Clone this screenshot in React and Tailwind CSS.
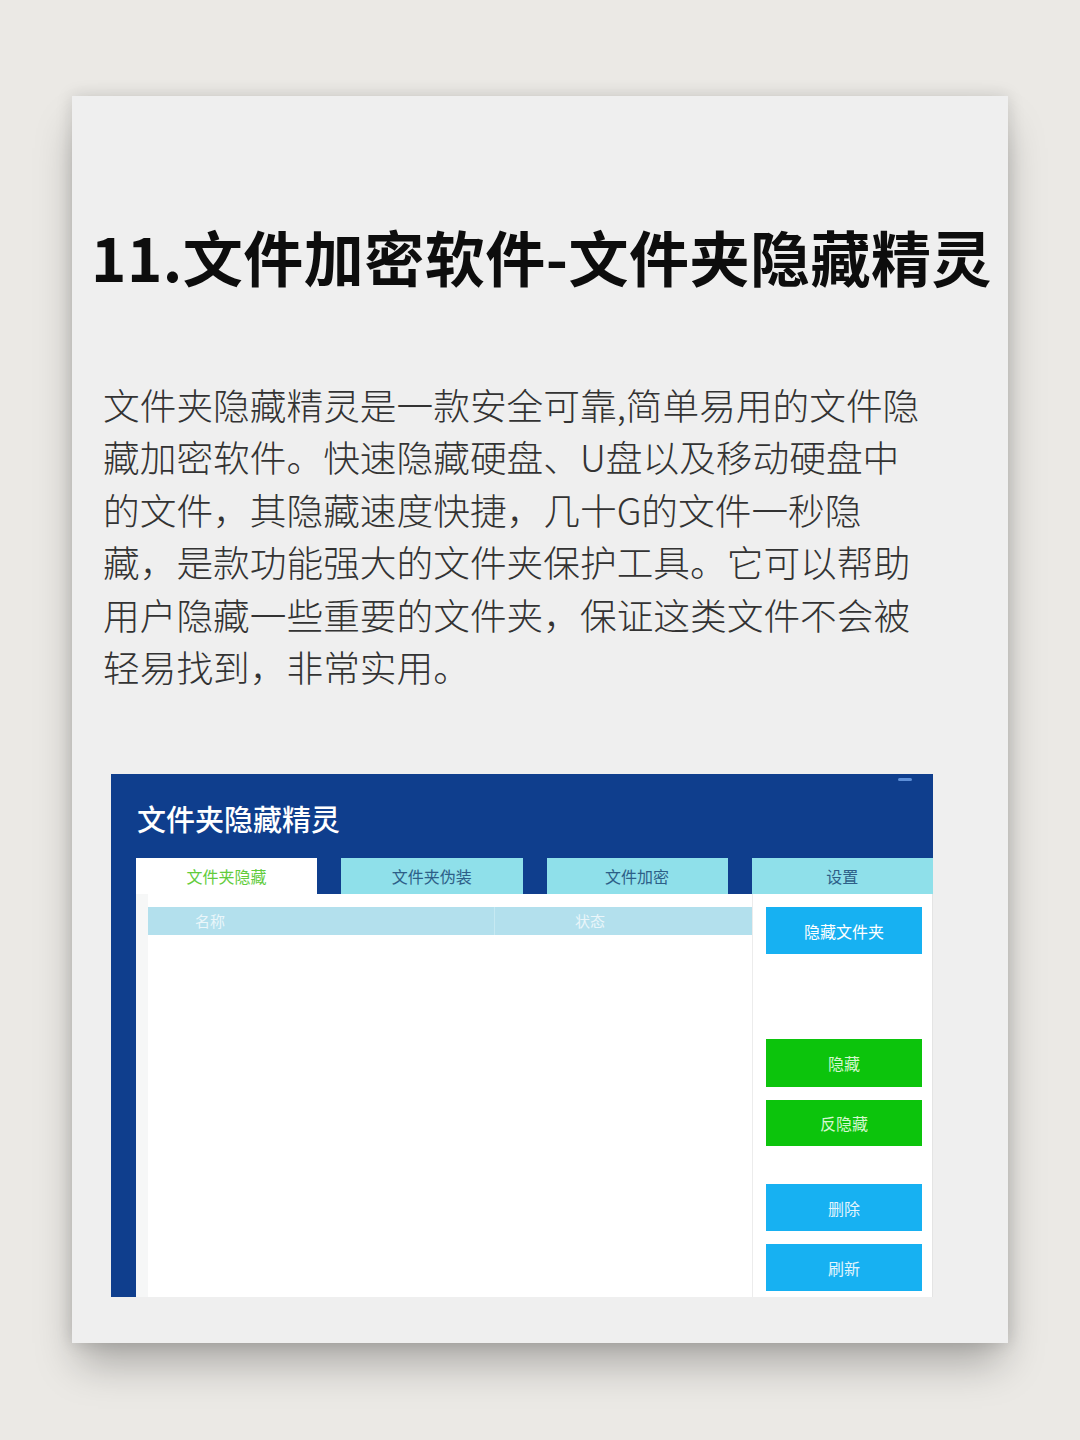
export default function App() {
  const font = { fontFamily: '"Noto Sans CJK SC", "Noto Sans", sans-serif' };
  const lines = [
    "文件夹隐藏精灵是一款安全可靠,简单易用的文件隐",
    "藏加密软件。快速隐藏硬盘、U盘以及移动硬盘中",
    "的文件，其隐藏速度快捷，几十G的文件一秒隐",
    "藏，是款功能强大的文件夹保护工具。它可以帮助",
    "用户隐藏一些重要的文件夹，保证这类文件不会被",
    "轻易找到，非常实用。",
  ];
  return (
    <div className="min-h-[1440px] w-[1080px] bg-[#ebe9e5] pt-[96px] pl-[72px]" style={font}>
      <div className="w-[936px] h-[1247px] bg-[#efefef] shadow-[0_26px_40px_-6px_rgba(0,0,0,0.28),0_0_16px_rgba(0,0,0,0.14)] flex flex-col">
        <h1 className="mt-[124px] pl-[19px] text-[60px] leading-[72px] font-bold text-[#0d0d0d] whitespace-nowrap tracking-[0.5px]">
          11.文件加密软件-文件夹隐藏精灵
        </h1>
        <div className="mt-[86px] pl-[31px] text-[36.7px] leading-[52.4px] font-light text-[#333]">
          {lines.map((l, i) => (
            <div key={i} className="whitespace-nowrap">{l}</div>
          ))}
        </div>
        <div className="mt-[82px] ml-[39px] w-[822px] h-[523px] bg-[#0f3e8d] flex flex-col relative overflow-hidden">
          <div className="absolute right-[21px] top-[4px] w-[14px] h-[3px] rounded-full bg-[#5d8fd8]"></div>
          <div className="pl-[26px] pt-[24px] h-[84px] text-[29px] leading-[40px] text-white font-medium">
            文件夹隐藏精灵
          </div>
          <div className="ml-[25px] grid grid-cols-4 gap-[24px] h-[36px]">
            <div className="bg-white flex items-center justify-center text-[16px] text-[#62cc3c]">文件夹隐藏</div>
            <div className="bg-[#8fe0ea] flex items-center justify-center text-[16px] text-[#2d5f88]">文件夹伪装</div>
            <div className="bg-[#8fe0ea] flex items-center justify-center text-[16px] text-[#2d5f88]">文件加密</div>
            <div className="bg-[#8fe0ea] flex items-center justify-center text-[16px] text-[#2d5f88]">设置</div>
          </div>
          <div className="ml-[25px] flex-1 bg-white flex border-r border-[#e4e4e4]">
            <div className="w-[12px] bg-[#f6f7f7]"></div>
            <div className="w-[605px] pt-[13px] flex flex-col border-r border-[#ececec]">
              <div className="h-[28px] bg-[#b3e0ed] flex text-[15px] text-[#eaf6fa] leading-[28px]">
                <div className="w-[347px] pl-[47px] border-r border-[#c6e9f2]">名称</div>
                <div className="flex-1 pl-[80px]">状态</div>
              </div>
              <div className="flex-1 bg-white"></div>
            </div>
            <div className="flex-1 pl-[13px] pr-[10px] pt-[13px] flex flex-col text-[16px]">
              <div className="h-[47px] bg-[#17b1f2] text-white flex items-center justify-center">隐藏文件夹</div>
              <div className="mt-[85px] h-[48px] bg-[#0cc40c] text-[#d4f7cf] flex items-center justify-center">隐藏</div>
              <div className="mt-[13px] h-[46px] bg-[#0cc40c] text-[#d4f7cf] flex items-center justify-center">反隐藏</div>
              <div className="mt-[38px] h-[47px] bg-[#17b1f2] text-[#e2f5fd] flex items-center justify-center">删除</div>
              <div className="mt-[13px] h-[47px] bg-[#17b1f2] text-[#e2f5fd] flex items-center justify-center">刷新</div>
            </div>
          </div>
        </div>
      </div>
    </div>
  );
}
